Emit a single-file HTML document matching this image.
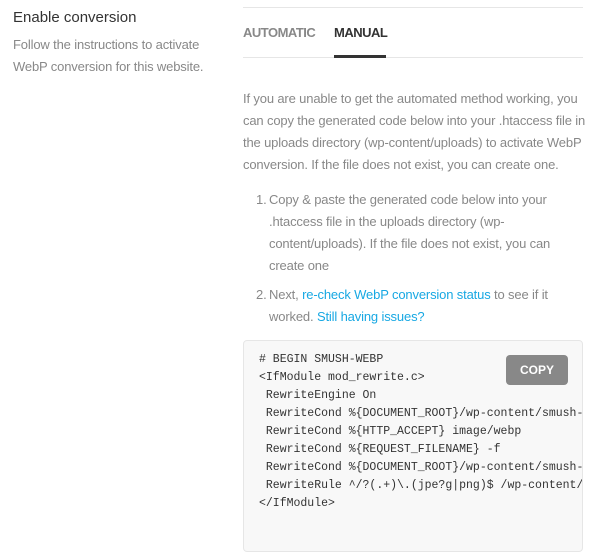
<!DOCTYPE html>
<html><head><style>
body{margin:0;width:600px;height:535px;background:#fff;overflow:hidden;position:relative;font-family:"Liberation Sans",sans-serif;}
.a{position:absolute;white-space:nowrap;}
.t{font-size:13px;color:#888;letter-spacing:-0.15px;line-height:22px;}
.l{color:#17a8e3;}
.m{font-family:"Liberation Mono",monospace;font-size:11.5px;color:#333;line-height:18px;white-space:pre;}
</style></head><body>
<div class="a" style="left:13px;top:9px;font-size:15px;color:#333;">Enable conversion</div>
<div class="a t" style="left:13px;top:34px">Follow the instructions to activate<br>WebP conversion for this website.</div>

<div class="a" style="left:243px;top:7px;width:340px;height:1px;background:#e6e6e6"></div>
<div class="a" style="left:243px;top:25px;font-size:13px;color:#888;font-weight:bold;letter-spacing:-0.5px">AUTOMATIC</div>
<div class="a" style="left:334px;top:25px;font-size:13px;color:#333;font-weight:bold;letter-spacing:-0.5px">MANUAL</div>
<div class="a" style="left:243px;top:57px;width:340px;height:1px;background:#e6e6e6"></div>
<div class="a" style="left:334px;top:55px;width:52px;height:3px;background:#333"></div>

<div class="a t" style="left:243px;top:88px">If you are unable to get the automated method working, you<br>can copy the generated code below into your .htaccess file in<br>the uploads directory (wp-content/uploads) to activate WebP<br>conversion. If the file does not exist, you can create one.</div>

<div class="a t" style="left:256px;top:189px">1.</div>
<div class="a t" style="left:269px;top:189px">Copy &amp; paste the generated code below into your<br>.htaccess file in the uploads directory (wp-<br>content/uploads). If the file does not exist, you can<br>create one</div>
<div class="a t" style="left:256px;top:284px">2.</div>
<div class="a t" style="left:269px;top:284px">Next, <span class="l">re-check WebP conversion status</span> to see if it<br>worked. <span class="l">Still having issues?</span></div>

<div class="a" style="left:243px;top:340px;width:338px;height:210px;background:#f8f8f8;border:1px solid #e6e6e6;border-radius:4px;overflow:hidden">
<div class="a m" style="left:15px;top:10px"># BEGIN SMUSH-WEBP
&lt;IfModule mod_rewrite.c&gt;
 RewriteEngine On
 RewriteCond %{DOCUMENT_ROOT}/wp-content/smush-webp/$1.webp -f
 RewriteCond %{HTTP_ACCEPT} image/webp
 RewriteCond %{REQUEST_FILENAME} -f
 RewriteCond %{DOCUMENT_ROOT}/wp-content/smush-webp/$1.webp -f
 RewriteRule ^/?(.+)\.(jpe?g|png)$ /wp-content/smush-webp/$1.webp
&lt;/IfModule&gt;</div>
<div class="a" style="left:262px;top:14px;width:62px;height:30px;background:#888;border-radius:4px;color:#fff;font-weight:bold;font-size:12px;line-height:30px;text-align:center">COPY</div>
</div>
</body></html>
